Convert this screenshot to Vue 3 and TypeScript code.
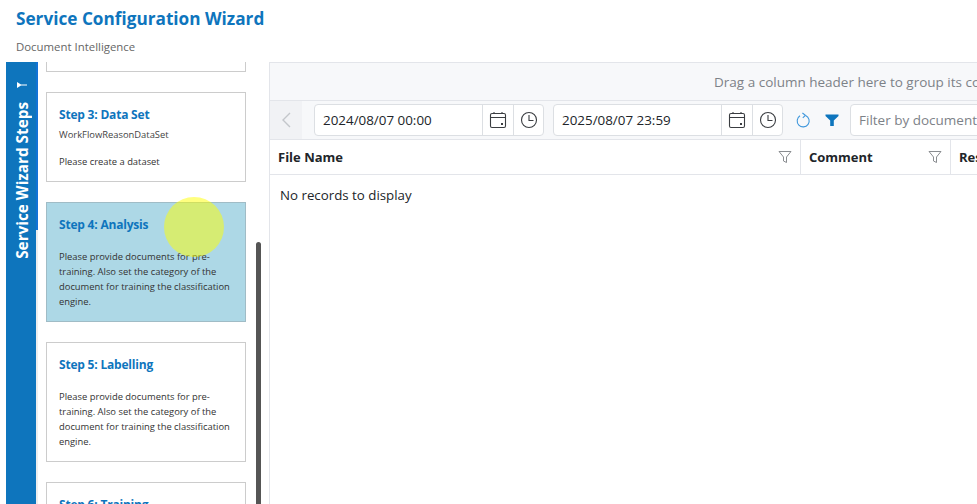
<template>
  <div class="page">
    <header class="head">
      <h1 class="title">Service Configuration Wizard</h1>
      <div class="subtitle">Document Intelligence</div>
    </header>
    <div class="body">
      <div class="tab">
        <svg class="tab_arrow" width="10" height="6" viewBox="0 0 10 6">
          <path d="M0 0V6L4 3.5H10V2.5H4Z" fill="#fff" />
        </svg>
        <span class="tab_text">Service Wizard Steps</span>
      </div>
      <div class="steps">
        <div class="step_list">
          <div
            v-for="step in steps"
            :key="step.title"
            class="step"
            :class="{ active: step.active }"
            :style="{ height: step.height + 'px' }"
          >
            <div class="step_title">{{ step.title }}</div>
            <div v-if="step.sub" class="step_sub">{{ step.sub }}</div>
            <div class="step_text" :class="{ short: step.sub }">{{ step.text }}</div>
          </div>
        </div>
        <div class="scrollbar"></div>
      </div>
      <div class="grid">
        <div class="group_panel">Drag a column header here to group its column</div>
        <div class="toolbar">
          <button class="back">
            <svg width="12" height="18" viewBox="0 0 12 18">
              <path d="M10 2L3 9L10 16" fill="none" stroke="#c3c6cb" stroke-width="1.4" />
            </svg>
          </button>
          <div class="picker" v-for="date in dates" :key="date">
            <span class="picker_value">{{ date }}</span>
            <span class="picker_btn">
              <svg width="18" height="18" viewBox="0 0 18 18" fill="none" stroke="#3a3d41" stroke-width="1.1">
                <rect x="1.5" y="2.5" width="15" height="14" rx="1.5" />
                <path d="M1.5 6.5H16.5M5 1V3M13 1V3" />
                <rect x="12" y="12" width="2" height="2" fill="#3a3d41" stroke="none" />
              </svg>
            </span>
            <span class="picker_btn">
              <svg width="18" height="18" viewBox="0 0 18 18" fill="none" stroke="#3a3d41" stroke-width="1.1">
                <circle cx="9" cy="9" r="7.5" />
                <path d="M9 4V9.5H13.5" />
              </svg>
            </span>
          </div>
          <svg class="refresh" width="16" height="16" viewBox="0 0 16 16" fill="none" stroke="#3f97dc" stroke-width="1.1">
            <path d="M5 3.8A6 6 0 1 0 10.6 3.4" />
            <path d="M7.4 1L10.4 3.4L7.8 5.8" />
          </svg>
          <svg class="funnel" width="14" height="14" viewBox="0 0 14 14">
            <path d="M0.5 1.5H13.5V3L8.8 7.6V13H5.2V7.6L0.5 3Z" fill="#0e75bd" />
          </svg>
          <div class="filter_input">Filter by document name</div>
        </div>
        <div class="columns">
          <div class="column file">
            <span>File Name</span>
            <svg width="14" height="14" viewBox="0 0 14 14">
              <path d="M1 1.5H13L8.5 7V12.5L5.5 11V7Z" fill="none" stroke="#8a8d91" />
            </svg>
          </div>
          <div class="column comment">
            <span>Comment</span>
            <svg width="14" height="14" viewBox="0 0 14 14">
              <path d="M1 1.5H13L8.5 7V12.5L5.5 11V7Z" fill="none" stroke="#8a8d91" />
            </svg>
          </div>
          <div class="column rest"><span>Result</span></div>
        </div>
        <div class="empty">No records to display</div>
      </div>
    </div>
    <div class="cursor_mark"></div>
  </div>
</template>

<script setup lang="ts">
interface Step {
  title: string;
  sub?: string;
  text: string;
  height: number;
  active?: boolean;
}

const longText =
  "Please provide documents for pre-training. Also set the category of the document for training the classification engine.";

const steps: Step[] = [
  { title: "Step 3: Data Set", sub: "WorkFlowReasonDataSet", text: "Please create a dataset", height: 90 },
  { title: "Step 4: Analysis", text: longText, height: 120, active: true },
  { title: "Step 5: Labelling", text: longText, height: 120 },
  { title: "Step 6: Training", text: longText, height: 120 },
];

const dates = ["2024/08/07 00:00", "2025/08/07 23:59"];
</script>

<style>
html,
body {
  margin: 0;
  overflow: hidden;
  background: #fff;
}
</style>

<style scoped>
.page {
  width: 977px;
  height: 504px;
  overflow: hidden;
  position: relative;
  font-family: "Open Sans", "Noto Sans", sans-serif;
  display: flex;
  flex-direction: column;
}
.head {
  height: 62px;
  flex: none;
  padding-left: 16px;
  box-sizing: border-box;
}
.title {
  margin: 0;
  padding-top: 7px;
  font-size: 17.2px;
  line-height: 24px;
  font-weight: 700;
  color: #0e75bd;
}
.subtitle {
  margin-top: 8px;
  font-size: 11.4px;
  line-height: 16px;
  color: #666;
}
.body {
  flex: 1;
  display: flex;
  padding-left: 6px;
  min-height: 0;
}
.tab {
  width: 32px;
  flex: none;
  position: relative;
  background: #0e75bd;
  border-right: 2px solid #eee;
  color: #fff;
  display: flex;
  flex-direction: column;
  align-items: center;
  padding-top: 20px;
  padding-left: 1px;
  box-sizing: border-box;
}
.tab::after {
  content: "";
  position: absolute;
  top: 0;
  right: -2px;
  width: 2px;
  height: 168px;
  background: #1273d6;
}
.tab_arrow {
  margin-bottom: 14px;
}
.tab_text {
  writing-mode: vertical-rl;
  transform: rotate(180deg);
  font-size: 15.3px;
  font-weight: 700;
  white-space: nowrap;
}
.steps {
  width: 224px;
  position: relative;
  overflow: hidden;
  flex: none;
  padding-left: 8px;
  box-sizing: border-box;
}
.step_list {
  display: flex;
  flex-direction: column;
  gap: 20px;
  padding-top: 30px;
  position: relative;
}
.step_list::before {
  content: "";
  width: 200px;
  height: 10px;
  margin: -30px 0 0;
  box-sizing: border-box;
  border: 1px solid #ccc;
  border-top: 0;
  flex: none;
}
.step {
  flex: none;
  width: 200px;
  box-sizing: border-box;
  border: 1px solid #ccc;
  background: #fff;
  padding: 12px 12px 0;
}
.step.active {
  background: #add8e6;
  border-color: #a0bcc6;
}
.step_title {
  font-size: 12px;
  line-height: 20px;
  font-weight: 700;
  letter-spacing: -0.2px;
  color: #0e75bd;
}
.step_sub {
  font-size: 9.4px;
  line-height: 12px;
  margin-top: 4px;
  color: #444;
}
.step_text {
  font-size: 9.4px;
  line-height: 15px;
  margin-top: 14px;
  color: #333;
}
.step_text.short {
  margin-top: 13px;
}
.scrollbar {
  position: absolute;
  left: 218px;
  top: 180px;
  width: 5px;
  height: 270px;
  background: #555;
  border-radius: 3px 3px 0 0;
}
.grid {
  margin-left: 7px;
  flex: 1;
  min-width: 0;
  border-left: 1px solid #e3e5ea;
  border-top: 1px solid #e3e5ea;
  font-size: 14px;
  color: #212529;
  overflow: hidden;
}
.group_panel {
  height: 36px;
  padding-top: 1px;
  background: #f7f8fa;
  border-bottom: 1px solid #e3e5ea;
  color: #7d8288;
  font-size: 13.5px;
  line-height: 37px;
  padding-left: 444px;
  white-space: nowrap;
}
.toolbar {
  height: 38px;
  background: #f7f8fa;
  border-bottom: 1px solid #e3e5ea;
  display: flex;
  align-items: center;
  white-space: nowrap;
}
.back {
  width: 32px;
  height: 100%;
  border: 0;
  padding: 0;
  background: #f1f2f5;
  display: flex;
  align-items: center;
  justify-content: center;
  flex: none;
}
.picker {
  display: flex;
  align-items: stretch;
  height: 32px;
  width: 230px;
  flex: none;
  margin-left: 12px;
  margin-right: -3px;
  box-sizing: border-box;
  border: 1px solid #dcdfe3;
  border-radius: 4px;
  background: #fff;
}
.picker_value {
  flex: 1;
  padding-left: 8px;
  font-size: 13.4px;
  line-height: 30px;
}
.picker_btn {
  width: 30.5px;
  box-sizing: border-box;
  border-left: 1px solid #dcdfe3;
  padding-left: 1px;
  display: flex;
  align-items: center;
  justify-content: center;
}
.refresh {
  margin-left: 15px;
  flex: none;
}
.funnel {
  margin-left: 14px;
  flex: none;
}
.filter_input {
  margin-left: 11px;
  height: 32px;
  width: 300px;
  flex: none;
  box-sizing: border-box;
  border: 1px solid #dcdfe3;
  border-radius: 4px;
  background: #fff;
  color: #7d8288;
  padding-left: 8px;
  line-height: 30px;
  font-size: 13.5px;
}
.columns {
  height: 34px;
  display: flex;
  border-bottom: 1px solid #e3e5ea;
}
.column {
  box-sizing: border-box;
  border-right: 1px solid #e3e5ea;
  padding: 0 8px;
  display: flex;
  align-items: center;
  justify-content: space-between;
  font-size: 13px;
  font-weight: 700;
  flex: none;
}
.column.file {
  width: 531px;
}
.column.comment {
  width: 150px;
}
.column.rest {
  width: 100px;
  border-right: 0;
}
.empty {
  padding: 10px;
  font-size: 13.3px;
  line-height: 20px;
}
.cursor_mark {
  position: absolute;
  left: 164px;
  top: 197px;
  width: 60px;
  height: 60px;
  border-radius: 50%;
  background: rgba(255, 255, 0, 0.5);
}
</style>
